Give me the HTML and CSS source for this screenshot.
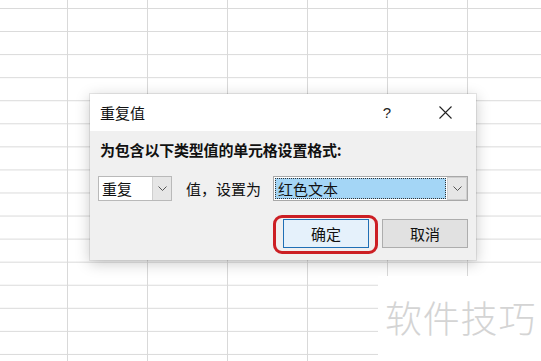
FILE: index.html
```html
<!DOCTYPE html>
<html lang="zh-CN">
<head>
<meta charset="utf-8">
<title>重复值</title>
<link rel="stylesheet" href="styles.css">
</head>
<body>
<div class="sheet"></div>
<div class="dialog">
  <div class="titlebar">
    <span class="title">重复值</span>
    <span class="help">?</span>
    <span class="close">
      <svg width="13" height="13" viewBox="0 0 13 13"><path d="M0.5 0.5 L12.5 12.5 M12.5 0.5 L0.5 12.5" stroke="#222" stroke-width="1.1" fill="none"/></svg>
    </span>
  </div>
  <div class="body">
    <div class="label">为包含以下类型值的单元格设置格式:</div>
    <div class="row">
      <div class="combo combo-small">
        <span class="combo-text">重复</span>
        <span class="drop"><svg width="9" height="5" viewBox="0 0 9 5"><path d="M0.5 0.5 L4.5 4.5 L8.5 0.5" stroke="#555" stroke-width="1" fill="none"/></svg></span>
      </div>
      <span class="mid">值，设置为</span>
      <div class="combo combo-wide">
        <span class="combo-sel">红色文本</span>
        <span class="drop"><svg width="9" height="5" viewBox="0 0 9 5"><path d="M0.5 0.5 L4.5 4.5 L8.5 0.5" stroke="#555" stroke-width="1" fill="none"/></svg></span>
      </div>
    </div>
    <div class="buttons">
      <button class="btn btn-ok">确定</button>
      <button class="btn btn-cancel">取消</button>
    </div>
  </div>
</div>
<div class="watermark">软件技巧</div>
</body>
</html>
```
FILE: styles.css
```css
html, body {
  margin: 0;
  padding: 0;
  width: 541px;
  height: 361px;
  overflow: hidden;
  background: #fff;
  font-family: "Noto Sans CJK SC", "Noto Sans", sans-serif;
  color: #111;
}
.sheet {
  width: 541px;
  height: 361px;
  background-color: #fff;
  background-image:
    linear-gradient(to right, #d9d9d9 1px, transparent 1px),
    linear-gradient(to bottom, #d9d9d9 1px, transparent 1px);
  background-size: 80px 23.07px, 80px 23.07px;
  background-position: 67px 0, 0 8px;
}
.dialog {
  position: absolute;
  left: 90px;
  top: 94px;
  width: 386px;
  height: 166px;
  background: #f0f0f0;
  box-shadow: 0 3px 14px rgba(0,0,0,0.22), 0 0 0 1px rgba(0,0,0,0.08);
  display: flex;
  flex-direction: column;
}
.titlebar {
  height: 37px;
  background: #fff;
  display: flex;
  align-items: center;
  padding-left: 10px;
  flex: none;
}
.title {
  font-size: 15px;
  line-height: 20px;
  flex: 1;
}
.help {
  font-family: "Liberation Sans", sans-serif;
  font-size: 15px;
  width: 10px;
  text-align: center;
  margin-right: 47px;
  color: #222;
}
.close {
  display: flex;
  width: 13px;
  height: 13px;
  margin-right: 24px;
}
.body {
  padding: 9px 8px 0 8px;
  display: flex;
  flex-direction: column;
}
.label {
  font-size: 15px;
  font-weight: bold;
  line-height: 20px;
  padding-left: 2px;
  letter-spacing: -0.2px;
}
.row {
  margin-top: 16px;
  height: 25px;
  display: flex;
  align-items: center;
}
.combo {
  height: 25px;
  box-sizing: border-box;
  border: 1px solid #b9b9b9;
  background: #fff;
  display: flex;
  align-items: stretch;
}
.combo-small {
  width: 74px;
}
.combo-wide {
  flex: 1;
  margin-left: 12px;
  border-color: #a8a8a8;
  padding: 1px;
}
.combo-text {
  flex: 1;
  font-size: 15px;
  line-height: 23px;
  padding-left: 3px;
}
.combo-sel {
  flex: 1;
  background: #a4d6f6;
  outline: 1px dotted #333;
  outline-offset: -1px;
  font-size: 15px;
  line-height: 21px;
  padding-left: 3px;
  margin-right: 2px;
}
.drop {
  width: 19px;
  box-sizing: border-box;
  background: #e6e6e6;
  border-left: 1px solid #cfcfcf;
  display: flex;
  align-items: center;
  justify-content: center;
}
.combo-wide .drop {
  width: 20px;
  margin: -1px;
  border: 1px solid #cfcfcf;
}
.mid {
  font-size: 15px;
  margin-left: 14px;
  line-height: 20px;
}
.buttons {
  margin-top: 18px;
  display: flex;
  justify-content: flex-end;
  gap: 13px;
}
.btn {
  width: 86px;
  height: 29px;
  box-sizing: border-box;
  font-family: "Noto Sans CJK SC", sans-serif;
  font-size: 15px;
  color: #111;
  padding: 0;
  margin: 0;
  line-height: 27px;
}
.btn-ok {
  position: relative;
  background: #e5f1fb;
  border: 1px solid #1f6fb5;
}
.btn-ok::after {
  content: "";
  position: absolute;
  left: -11px;
  top: -5px;
  right: -10px;
  bottom: -7px;
  border: 3px solid #cc1f24;
  border-radius: 9px;
}
.btn-cancel {
  background: #e1e1e1;
  border: 1px solid #adadad;
}
.watermark {
  position: absolute;
  left: 378px;
  top: 276px;
  width: 163px;
  height: 85px;
  background: #fff;
  box-sizing: border-box;
  padding-left: 7px;
  padding-top: 19px;
  font-size: 37px;
  font-weight: 300;
  line-height: 44px;
  color: #d4d4d4;
  letter-spacing: 0.8px;
}
```
